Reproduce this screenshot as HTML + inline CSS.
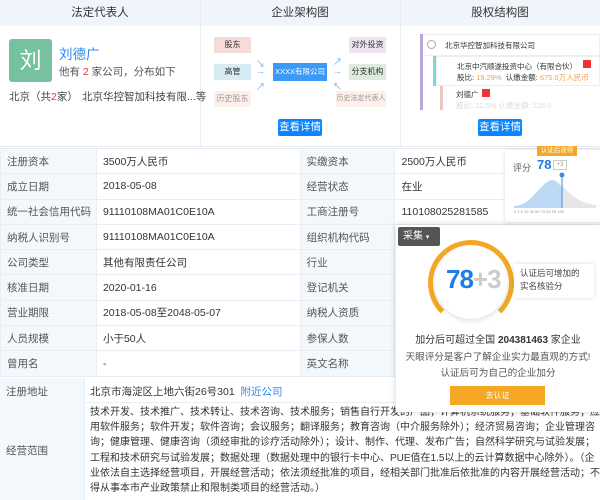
<!DOCTYPE html>
<html><head><meta charset="utf-8"><style>
*{margin:0;padding:0;box-sizing:border-box}
body{width:600px;height:500px;overflow:hidden;background:#fff;font-family:"Liberation Sans","Noto Sans CJK SC",sans-serif;font-size:11px;color:#333;position:relative}
.a{position:absolute}
.hd{background:#f0f5fb;height:26px;line-height:26px;text-align:center;font-size:11.5px;color:#333;top:0}
.vl{border-left:1px solid #e8edf3;top:0;height:146px}
.btn{background:#0b84ff;color:#fff;text-align:center;border-radius:2px;font-size:10.5px;line-height:17px;height:17px;width:44px}
.box{height:16px;line-height:16px;text-align:center;font-size:8px;width:37px;color:#333}
table{border-collapse:collapse;position:absolute;left:0;top:148px;width:600px}
td{border:1px solid #e9eef4;height:25.3px;padding-left:6px;font-size:10.5px;color:#333;white-space:nowrap}
td.l{background:#f3f8fd;color:#555}
</style></head><body>
<div class="a hd" style="left:0;width:200px">法定代表人</div>
<div class="a hd" style="left:200px;width:200px">企业架构图</div>
<div class="a hd" style="left:400px;width:200px">股权结构图</div>
<div class="a vl" style="left:200px"></div><div class="a vl" style="left:400px"></div>
<div class="a" style="left:0;top:146px;width:600px;border-top:1px solid #e8edf3"></div>

<div class="a" style="left:9px;top:39px;width:43px;height:43px;background:#76c2a0;border-radius:3px;color:#fff;font-size:22px;line-height:43px;text-align:center">刘</div>
<div class="a" style="left:59px;top:43px;font-size:13.5px;color:#2e8af0">刘德广</div>
<div class="a" style="left:59px;top:64px;font-size:10.5px;color:#555">他有 <span style="color:#e33">2</span> 家公司，分布如下</div>
<div class="a" style="left:9px;top:89px;font-size:10.5px;color:#444">北京（共<span style="color:#e33">2</span>家）</div>
<div class="a" style="left:82px;top:89px;font-size:10.5px;color:#444">北京华控智加科技有限...等</div>

<div class="a box" style="left:214px;top:37px;background:#f6dcd8">股东</div>
<div class="a box" style="left:214px;top:64px;background:#d6ebf3">高管</div>
<div class="a box" style="left:214px;top:91px;background:#fdf0ea;color:#999">历史股东</div>
<div class="a" style="left:256px;top:57px;color:#6aa8e8;font-size:9px">↘</div>
<div class="a" style="left:256px;top:66px;color:#6aa8e8;font-size:9px">→</div>
<div class="a" style="left:256px;top:80px;color:#6aa8e8;font-size:9px">↗</div>
<div class="a" style="left:273px;top:63px;width:54px;height:18px;line-height:18px;background:#3a9af6;color:#fff;font-size:7.5px;text-align:center">XXXX有限公司</div>
<div class="a" style="left:333px;top:55px;color:#6aa8e8;font-size:9px">↗</div>
<div class="a" style="left:333px;top:66px;color:#6aa8e8;font-size:9px">→</div>
<div class="a" style="left:333px;top:80px;color:#6aa8e8;font-size:9px">↖</div>
<div class="a box" style="left:349px;top:37px;background:#ece4f3">对外投资</div>
<div class="a box" style="left:349px;top:64px;background:#dcebdc">分支机构</div>
<div class="a box" style="left:336px;top:91px;width:50px;background:#fdf0ea;color:#999;font-size:7px;white-space:nowrap">历史法定代表人</div>
<div class="a btn" style="left:278px;top:119px">查看详情</div>

<div class="a" style="left:420px;top:34px;width:180px;height:76px;overflow:hidden">
 <div class="a" style="left:0;top:0;width:3px;height:76px;background:#b8a6db"></div>
 <div class="a" style="left:3px;top:0;width:177px;height:22px;border:1px solid #eee;border-left:0;font-size:7.5px;line-height:22px;padding-left:22px">北京华控智加科技有限公司</div>
 <div class="a" style="left:7px;top:6px;width:9px;height:9px;border:1px solid #aaa;border-radius:50%"></div>
 <div class="a" style="left:13px;top:22px;width:3px;height:30px;background:#7ed8d0"></div>
 <div class="a" style="left:16px;top:22px;width:164px;height:30px;border:1px solid #eee;font-size:7.5px;padding:4px 0 0 20px;line-height:11px">北京中汽顺遂投资中心（有限合伙）<br>股比: <span style="color:#f0a050">19.29%</span>&nbsp; 认缴金额: <span style="color:#f0a050">675.0万人民币</span></div>
 <div class="a" style="left:163px;top:26px;width:8px;height:8px;background:#e33"></div>
 <div class="a" style="left:20px;top:52px;width:3px;height:24px;background:#e8c8c0"></div>
 <div class="a" style="left:36px;top:55px;font-size:7.5px">刘德广</div>
 <div class="a" style="left:62px;top:55px;width:8px;height:8px;background:#e33"></div>
 <div class="a" style="left:36px;top:66px;font-size:7.5px;color:#ddd">股比: 12.5% 认缴金额: 125.0</div>
</div>
<div class="a btn" style="left:478px;top:119px">查看详情</div>

<table>
<colgroup><col style="width:96px"><col style="width:204px"><col style="width:95px"><col style="width:205px"></colgroup>
<tr><td class="l">注册资本</td><td>3500万人民币</td><td class="l">实缴资本</td><td>2500万人民币</td></tr>
<tr><td class="l">成立日期</td><td>2018-05-08</td><td class="l">经营状态</td><td>在业</td></tr>
<tr><td class="l">统一社会信用代码</td><td>91110108MA01C0E10A</td><td class="l">工商注册号</td><td>110108025281585</td></tr>
<tr><td class="l">纳税人识别号</td><td>91110108MA01C0E10A</td><td class="l">组织机构代码</td><td></td></tr>
<tr><td class="l">公司类型</td><td>其他有限责任公司</td><td class="l">行业</td><td></td></tr>
<tr><td class="l">核准日期</td><td>2020-01-16</td><td class="l">登记机关</td><td></td></tr>
<tr><td class="l">营业期限</td><td>2018-05-08至2048-05-07</td><td class="l">纳税人资质</td><td></td></tr>
<tr><td class="l">人员规模</td><td>小于50人</td><td class="l">参保人数</td><td></td></tr>
<tr><td class="l">曾用名</td><td>-</td><td class="l">英文名称</td><td></td></tr>
</table>
<div class="a" style="left:0;top:378px;width:600px;height:25px;border-bottom:1px solid #e9eef4"></div>
<div class="a" style="left:0;top:378px;width:85px;height:122px;background:#f3f8fd;border-right:1px solid #e9eef4"></div>
<div class="a" style="left:6px;top:384px;font-size:10.5px;color:#555">注册地址</div>
<div class="a" style="left:90px;top:384px;font-size:10.5px">北京市海淀区上地六街26号301 &nbsp;<span style="color:#2e8af0">附近公司</span></div>
<div class="a" style="left:6px;top:443px;font-size:10.5px;color:#555">经营范围</div>
<div class="a" style="left:90px;top:405px;width:512px;font-size:10px;line-height:15.2px;color:#333">技术开发、技术推广、技术转让、技术咨询、技术服务；销售自行开发的产品；计算机系统服务；基础软件服务；应用软件服务；软件开发；软件咨询；会议服务；翻译服务；教育咨询（中介服务除外）；经济贸易咨询；企业管理咨询；健康管理、健康咨询（须经审批的诊疗活动除外）；设计、制作、代理、发布广告；自然科学研究与试验发展；工程和技术研究与试验发展；数据处理（数据处理中的银行卡中心、PUE值在1.5以上的云计算数据中心除外）。（企业依法自主选择经营项目，开展经营活动；依法须经批准的项目，经相关部门批准后依批准的内容开展经营活动；不得从事本市产业政策禁止和限制类项目的经营活动。）</div>

<!-- small score card -->
<div class="a" style="left:505px;top:150px;width:95px;height:72px;background:#fff;box-shadow:0 0 4px rgba(0,0,0,.15)"></div>
<div class="a" style="left:537px;top:146px;width:40px;height:10px;background:#f5a623;color:#fff;font-size:6.5px;line-height:10px;text-align:center">认证后获得</div>
<div class="a" style="left:513px;top:161px;font-size:9px;color:#555">评分</div>
<div class="a" style="left:537px;top:157px;font-size:13px;font-weight:bold;color:#1e7be0">78</div>
<div class="a" style="left:553px;top:160px;width:14px;height:10px;border:1px solid #ccc;font-size:6px;line-height:8px;text-align:center;color:#999">+3</div>
<svg class="a" style="left:512px;top:172px" width="86" height="42"><path d="M2 34 C20 34 28 10 40 8 C50 7 56 30 84 33 L84 36 L2 36Z" fill="#e6e6e6"/><path d="M2 34 C20 34 28 10 40 8 C45 8 48 14 50 18 L50 36 L2 36Z" fill="#bcdaf6"/><line x1="50" y1="2" x2="50" y2="36" stroke="#3a8ee6"/><circle cx="50" cy="3" r="2.5" fill="#3a8ee6"/><text x="2" y="41" font-size="4" fill="#999">0 1 5 15 30 60 75 90 99 100</text></svg>

<!-- popup -->
<div class="a" style="left:396px;top:225px;width:204px;height:187px;background:#fff;box-shadow:0 0 6px rgba(0,0,0,.18)"></div>
<div class="a" style="left:398px;top:227px;width:42px;height:19px;background:#555;border-radius:2px;color:#fff;font-size:10px;line-height:19px;padding-left:5px">采集 <span style="font-size:7px">▾</span></div>
<div class="a" style="left:428px;top:240px;width:86px;height:86px;border-radius:50%;border:5px solid #f2a825;border-bottom-color:transparent"></div>
<div class="a" style="left:435px;top:247px;width:72px;height:72px;border-radius:50%;background:#fff;box-shadow:0 2px 5px rgba(0,0,0,.12)"></div>
<div class="a" style="left:446px;top:264px;font-size:26px;font-weight:bold;color:#1a7ee6;letter-spacing:-1px">78<span style="color:#ccc">+3</span></div>
<div class="a" style="left:514px;top:264px;width:80px;height:34px;background:#fff;box-shadow:0 0 4px rgba(0,0,0,.15);font-size:8.5px;line-height:13px;padding:3px 6px;color:#444">认证后可增加的<br>实名核验分</div>
<div class="a" style="left:396px;top:331px;width:204px;text-align:center;font-size:10px;color:#333">加分后可超过全国 <b>204381463</b> 家企业</div>
<div class="a" style="left:396px;top:350px;width:204px;text-align:center;font-size:9.6px;color:#555;line-height:16px;white-space:nowrap">天眼评分是客户了解企业实力最直观的方式!<br>认证后可为自己的企业加分</div>
<div class="a" style="left:450px;top:386px;width:95px;height:19px;background:#f5a623;color:#fff;font-size:8px;line-height:19px;text-align:center">去认证</div>
</body></html>
